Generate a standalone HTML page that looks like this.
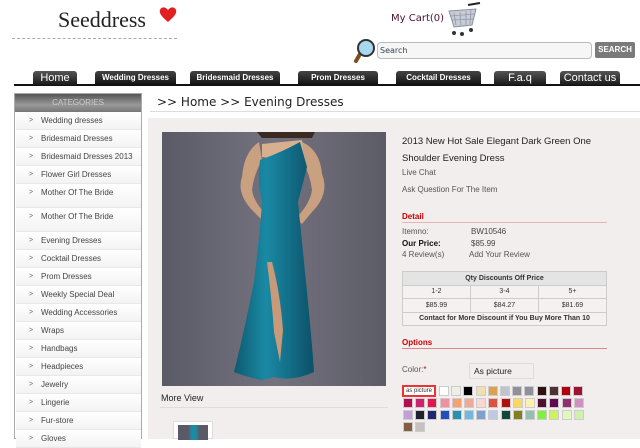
<!DOCTYPE html>
<html><head><meta charset="utf-8"><style>
*{margin:0;padding:0;box-sizing:border-box}
body{width:640px;height:439px;overflow:hidden;background:#fff;font-family:"Liberation Sans",sans-serif;position:relative}
.a{position:absolute}
.tab{position:absolute;top:71px;height:14px;background:linear-gradient(#444,#111);color:#fff;font-size:8px;font-weight:bold;text-align:center;line-height:14px;border-radius:3px 3px 0 0}
.tab.big{font-size:11px;font-weight:normal;background:linear-gradient(#555,#1a1a1a)}
.cat{position:absolute;left:16px;width:125px;height:18px;border-bottom:1px solid #e8e8e8;background:linear-gradient(#fff,#f3f3f3);font-size:8px;color:#444;line-height:18px}
.cat span{position:absolute;left:13px;font-size:7px;color:#666}
.cat b{position:absolute;left:25px;font-weight:normal}
.sw{position:absolute;width:10px;height:10px;border:1px solid #ccc}
td{border:1px solid #ccc;text-align:center;font-size:7px;color:#333;height:13.5px}
</style></head><body>
<div class="a" style="left:58px;top:7px;font-family:'Liberation Serif',serif;font-size:22px;color:#222">Seeddress</div>
<svg class="a" style="left:159px;top:6px" width="18" height="17" viewBox="0 0 18 17"><path d="M9 16 C2 10 0 7 1 4 C2 1 6 0 9 4 C12 0 16 1 17 4 C18 7 16 10 9 16Z" fill="#e02020"/></svg>
<div class="a" style="left:12px;top:38px;width:165px;border-top:1px dashed #aaa"></div>
<div class="a" style="left:391px;top:13px;font-size:10px;color:#4a1030;font-family:'DejaVu Sans',sans-serif">My Cart(0)</div>
<svg class="a" style="left:446px;top:1px" width="36" height="36" viewBox="0 0 36 36"><path d="M22 4 L34 2" stroke="#222" stroke-width="2"/><path d="M3 10 L30 8 L26 24 L8 26Z" fill="#c8ccd4" stroke="#8890a0"/><path d="M8 12 L10 24 M14 11 L15 25 M20 10 L20 24 M25 9 L24 23 M5 15 L28 13 M6 19 L27 18" stroke="#9099aa" stroke-width=".8"/><circle cx="8" cy="32" r="2" fill="#333"/><circle cx="16" cy="33" r="2" fill="#333"/><circle cx="25" cy="29" r="2" fill="#333"/></svg>
<svg class="a" style="left:351px;top:39px" width="26" height="25" viewBox="0 0 26 25"><path d="M9 15 L5 22" stroke="#7a5020" stroke-width="4" stroke-linecap="round"/><circle cx="15" cy="9" r="8" fill="#a8d8f0" stroke="#333" stroke-width="2"/></svg>
<div class="a" style="left:377px;top:42px;width:215px;height:17px;border:1px solid #bbb;border-radius:4px;background:#f6f6f6;font-size:8px;color:#345;line-height:15px;padding-left:2px;font-family:'DejaVu Sans',sans-serif">Search</div>
<div class="a" style="left:595px;top:42px;width:40px;height:16px;background:#7a7a7a;color:#fff;font-size:8px;font-weight:bold;text-align:center;line-height:16px;border-radius:2px">SEARCH</div>
<div class="a" style="left:14px;top:84px;width:626px;height:2px;background:#111"></div>
<div class="tab big" style="left:33px;width:44px">Home</div>
<div class="tab" style="left:95px;width:81px">Wedding Dresses</div>
<div class="tab" style="left:190px;width:90px">Bridesmaid Dresses</div>
<div class="tab" style="left:298px;width:80px">Prom Dresses</div>
<div class="tab" style="left:396px;width:85px">Cocktail Dresses</div>
<div class="tab big" style="left:494px;width:52px">F.a.q</div>
<div class="tab big" style="left:560px;width:60px">Contact us</div>
<div class="a" style="left:14px;top:93px;width:128px;height:346px;border:1px solid #aaa"></div>
<div class="a" style="left:15px;top:94px;width:126px;height:18px;background:linear-gradient(#555,#999 60%,#777);color:#ccc;font-size:8px;text-align:center;line-height:18px">CATEGORIES</div>
<div class="cat" style="top:112px"><span>&gt;</span><b>Wedding dresses</b></div>
<div class="cat" style="top:130px"><span>&gt;</span><b>Bridesmaid Dresses</b></div>
<div class="cat" style="top:148px"><span>&gt;</span><b>Bridesmaid Dresses 2013</b></div>
<div class="cat" style="top:166px"><span>&gt;</span><b>Flower Girl Dresses</b></div>
<div class="cat" style="top:184px;height:24px;line-height:18px"><span>&gt;</span><b>Mother Of The Bride</b></div>
<div class="cat" style="top:208px;height:24px;line-height:18px"><span>&gt;</span><b>Mother Of The Bride</b></div>
<div class="cat" style="top:232px"><span>&gt;</span><b>Evening Dresses</b></div>
<div class="cat" style="top:250px"><span>&gt;</span><b>Cocktail Dresses</b></div>
<div class="cat" style="top:268px"><span>&gt;</span><b>Prom Dresses</b></div>
<div class="cat" style="top:286px"><span>&gt;</span><b>Weekly Special Deal</b></div>
<div class="cat" style="top:304px"><span>&gt;</span><b>Wedding Accessories</b></div>
<div class="cat" style="top:322px"><span>&gt;</span><b>Wraps</b></div>
<div class="cat" style="top:340px"><span>&gt;</span><b>Handbags</b></div>
<div class="cat" style="top:358px"><span>&gt;</span><b>Headpieces</b></div>
<div class="cat" style="top:376px"><span>&gt;</span><b>Jewelry</b></div>
<div class="cat" style="top:394px"><span>&gt;</span><b>Lingerie</b></div>
<div class="cat" style="top:412px"><span>&gt;</span><b>Fur-store</b></div>
<div class="cat" style="top:430px"><span>&gt;</span><b>Gloves</b></div>
<div class="a" style="left:157px;top:95px;font-size:12px;color:#222;font-family:'DejaVu Sans',sans-serif">&gt;&gt; Home &gt;&gt; Evening Dresses</div>
<div class="a" style="left:150px;top:111px;width:490px;height:1px;background:#ddd"></div>
<div class="a" style="left:148px;top:118px;width:492px;height:321px;background:#f2eeed"></div>
<svg class="a" style="left:162px;top:132px" width="224" height="254" viewBox="0 0 224 254">
<defs><linearGradient id="bg" x1="0" x2="1"><stop offset="0" stop-color="#5a5a66"/><stop offset=".5" stop-color="#74727f"/><stop offset="1" stop-color="#5c5c66"/></linearGradient>
<linearGradient id="dr" x1="0" x2="1"><stop offset="0" stop-color="#0d5a70"/><stop offset=".4" stop-color="#1a8aa5"/><stop offset="1" stop-color="#0c5068"/></linearGradient></defs>
<rect width="224" height="254" fill="url(#bg)"/>
<path d="M95 0 h58 L150 6 L100 6 Z" fill="#3a2a22"/>
<path d="M97 10 Q82 20 80 45 Q74 62 92 80 L104 92 L108 86 Q92 72 90 58 Q92 42 100 28Z" fill="#c9a080"/>
<path d="M140 10 Q158 18 160 42 Q168 62 150 80 L140 92 L134 86 Q148 72 150 58 Q148 42 140 28Z" fill="#c9a080"/>
<path d="M100 12 L140 8 L142 30 L100 25Z" fill="#d8b090"/>
<path d="M98 28 Q120 20 138 10 L145 35 Q140 55 136 70 Q140 110 145 160 Q150 210 152 240 Q130 250 112 245 L100 248 Q88 246 72 240 Q82 200 92 150 Q98 100 100 70 Q95 50 98 28Z" fill="url(#dr)"/>
<path d="M105 130 Q110 170 112 200 L118 230 L121 198 Q118 160 110 130Z" fill="#c99a7a"/>
</svg>
<div class="a" style="left:161px;top:393px;font-size:9px;color:#222">More View</div>
<div class="a" style="left:160px;top:407px;width:228px;height:1px;background:#ddd"></div>
<div class="a" style="left:173px;top:421px;width:40px;height:18px;background:#fff;border:1px solid #ddd"><div style="margin:3px 0 0 4px;width:30px;height:15px;background:linear-gradient(90deg,#5a5a66 35%,#1a8aa5 45%,#1a8aa5 60%,#5a5a66 70%)"></div></div>
<div class="a" style="left:402px;top:134px;font-size:9.5px;color:#222;line-height:16.5px">2013 New Hot Sale Elegant Dark Green One<br>Shoulder Evening Dress</div>
<div class="a" style="left:402px;top:168px;font-size:8px;color:#555">Live Chat</div>
<div class="a" style="left:402px;top:185px;font-size:8px;color:#555">Ask Question For The Item</div>
<div class="a" style="left:402px;top:212px;font-size:8px;color:#c00;font-weight:bold">Detail</div>
<div class="a" style="left:402px;top:222px;width:205px;height:1px;background:#e0b8b8"></div>
<div class="a" style="left:402px;top:227px;font-size:8px;color:#555">Itemno:</div>
<div class="a" style="left:471px;top:227px;font-size:8px;color:#444">BW10546</div>
<div class="a" style="left:402px;top:239px;font-size:8px;color:#111;font-weight:bold">Our Price:</div>
<div class="a" style="left:471px;top:239px;font-size:8px;color:#444">$85.99</div>
<div class="a" style="left:402px;top:250px;font-size:8px;color:#555">4 Review(s)</div>
<div class="a" style="left:469px;top:250px;font-size:8px;color:#555">Add Your Review</div>
<table class="a" style="left:402px;top:271px;width:205px;border-collapse:collapse;background:#f4f1f0">
<tr><td colspan="3" style="background:#e4e4e4;font-weight:bold">Qty Discounts Off Price</td></tr>
<tr><td>1-2</td><td>3-4</td><td>5+</td></tr>
<tr><td>$85.99</td><td>$84.27</td><td>$81.69</td></tr>
<tr><td colspan="3" style="font-weight:bold">Contact for More Discount if You Buy More Than 10</td></tr></table>
<div class="a" style="left:402px;top:338px;font-size:8px;color:#c00;font-weight:bold">Options</div>
<div class="a" style="left:402px;top:348px;width:205px;height:1px;background:#d88"></div>
<div class="a" style="left:402px;top:365px;font-size:8px;color:#555">Color:<span style="color:#c00">*</span></div>
<div class="a" style="left:469px;top:363px;width:65px;height:16px;border:1px solid #ddd;background:#f2eeed;font-size:8.5px;color:#222;line-height:14px;padding-left:4px">As picture</div>
<div class="a" style="left:402px;top:385px;width:34px;height:12px;border:2px solid #e33;background:#fff;font-size:6px;line-height:8px;text-align:center;color:#333">as picture</div>
<div id="sw"></div>
<script>
var rows=[[439,386,["#fff","#eeeee4","#000","#f0e0b0","#dba050","#c0c4d0","#909098","#909098","#301010","#503030","#b00010","#a01030"]],
[403,398,["#b01050","#d02070","#e01850","#f090a0","#f8a070","#f0a898","#f8d8d0","#e05040","#b01010","#f8d860","#fff0b0","#501030","#600850","#903070","#d090c0"]],
[403,410,["#c0a0d8","#202030","#202870","#2050c0","#2890b0","#70b8e0","#80a0d0","#c0c8e8","#104838","#808020","#90c0b0","#80f040","#d0f060","#e0f8c0","#d0f0b0"]],
[403,422,["#806040","#c8c0c0"]]];
var h="";rows.forEach(function(r){r[2].forEach(function(c,i){h+='<div class="sw" style="left:'+(r[0]+i*12.2)+'px;top:'+r[1]+'px;background:'+c+'"></div>'})});
document.getElementById("sw").innerHTML=h;
</script>
</body></html>
